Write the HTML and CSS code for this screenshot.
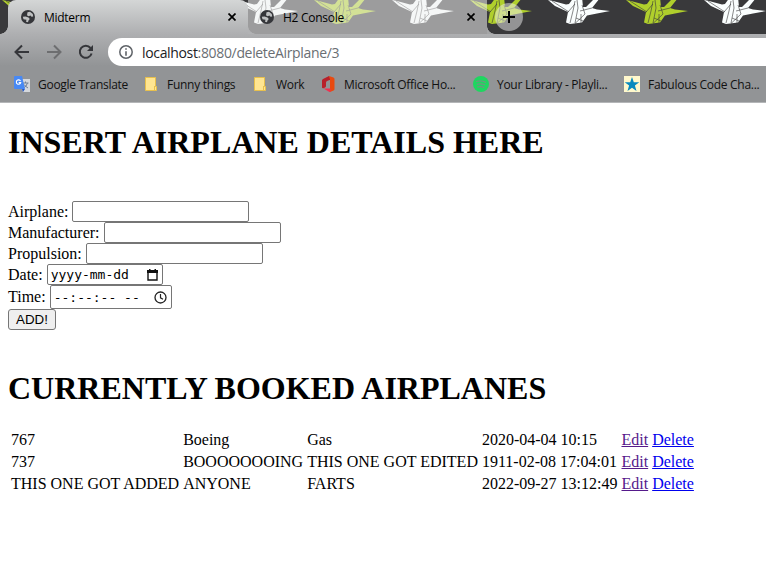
FILE: index.html
```html
<!DOCTYPE html>
<html lang="en">
<head>
<meta charset="utf-8">
<title>Midterm</title>
<link rel="stylesheet" href="styles.css">
</head>
<body>
<svg class="defs" width="0" height="0" aria-hidden="true">
  <symbol id="globe" viewBox="0 0 14 14"><circle cx="7" cy="7" r="7" fill="#35363a"/><path d="M6.500 2.200 9 1.800 11.800 4 12.200 6.500 10.500 6.800 9.500 5.500 7.500 6.200 6 5.200ZM1.800 6.800 4.500 6.500 7.500 7.500 8.800 9 7.500 10.500 7 12.200 5 11.800 5.500 9.800 2.500 9.200Z" fill="#bfc1c2"/></symbol>
  <symbol id="close" viewBox="0 0 8 8"><path d="M.5.5 7.500 7.500M7.500.5.5 7.500" stroke="#000" stroke-width="1.700"/></symbol>
  <symbol id="crane" viewBox="0 0 62 26"><path d="M0 0 5 1 18 4.500 21 4 26-3H34L35 7 38 7 47-2H52L44 8 49 9.500 62 11 49 13.500 39 15.500 34 22.500 22 24 18 22.500 20 12 7 6Z" fill="currentColor"/><path d="M4 1 21 12M27 23 30 8 29 0M22 23 25 11 27 1M34 5 37 14 27 23.500M28 18 35 21M20 12 27 4M32 11 44 8M33 14V23" fill="none" stroke="var(--fold)" stroke-width=".6"/></symbol>
</svg>
<header class="browser">
  <div class="tabs">
    <div class="pattern">
      <svg class="lime"><use href="#crane"/></svg><svg><use href="#crane"/></svg><svg class="lime"><use href="#crane"/></svg><svg><use href="#crane"/></svg><svg class="lime"><use href="#crane"/></svg><svg><use href="#crane"/></svg><svg class="lime"><use href="#crane"/></svg><svg><use href="#crane"/></svg><svg class="lime"><use href="#crane"/></svg><svg><use href="#crane"/></svg>
    </div>
    <div class="tab active"><svg class="globe"><use href="#globe"/></svg><span>Midterm</span><svg class="close"><use href="#close"/></svg></div>
    <div class="tab idle"><svg class="globe"><use href="#globe"/></svg><span>H2 Console</span><svg class="close"><use href="#close"/></svg></div>
    <div class="newtab"><svg width="12" height="12"><path d="M6 0V12M0 6H12" stroke="#000" stroke-width="2"/></svg></div>
  </div>
  <div class="toolbar">
    <svg width="16" height="16" viewBox="0 0 16 16"><path d="M15 8H2M8 1.500 1.500 8 8 14.500" fill="none" stroke="#35363a" stroke-width="2"/></svg>
    <svg width="16" height="16" viewBox="0 0 16 16"><path d="M1 8H14M8 1.500 14.500 8 8 14.500" fill="none" stroke="#6d6e70" stroke-width="2"/></svg>
    <svg width="16" height="16" viewBox="0 0 16 16"><path d="M13.600 9.500A6 6 0 1 1 12.500 4" fill="none" stroke="#35363a" stroke-width="2"/><path d="M15 1V7H9Z" fill="#35363a"/></svg>
    <div class="address"><svg width="14" height="14" viewBox="0 0 14 14"><circle cx="7" cy="7" r="6.200" fill="none" stroke="#5f6368" stroke-width="1.500"/><path d="M7 3.200V4.800M7 6.200V10.800" stroke="#5f6368" stroke-width="1.600"/></svg><span class="url"><b>localhost</b>:8080/deleteAirplane/3</span></div>
  </div>
  <nav class="bookmarks">
    <span class="mark translate"><svg width="16" height="16" viewBox="0 0 16 16"><path d="M6 3H16V16H9Z" fill="#d5d8dc"/><path d="M8.500 7H14.500M11.500 5.500V7M13.500 7Q12.500 10.500 9.500 12M10 8.500Q11.500 10.500 14 12" fill="none" stroke="#718096" stroke-width="1"/><path d="M1 0H8L11 13H1Q0 13 0 12V1Q0 0 1 0Z" fill="#4889f4"/><path d="M8 13H11L9 16Z" fill="#2457c5"/><path d="M6.500 5A2.200 2.200 0 1 0 6.700 6.600H4.700" fill="none" stroke="#fff" stroke-width="1.100"/></svg><span>Google Translate</span></span>
    <span class="mark funny"><svg width="12" height="14"><path d="M.5.5H10.500V9.500H11.500V13.500H.5Z" fill="#ffe591" stroke="#e8c04c"/><path d="M9.500 9V13" stroke="#e8c04c"/></svg><span>Funny things</span></span>
    <span class="mark work"><svg width="12" height="14"><path d="M.5.5H10.500V9.500H11.500V13.500H.5Z" fill="#ffe591" stroke="#e8c04c"/><path d="M9.500 9V13" stroke="#e8c04c"/></svg><span>Work</span></span>
    <span class="mark office"><svg width="13" height="16" viewBox="0 0 13 16"><path d="M0 4.500Q0 3.500 1 3L7 0 9 3.500 5 5Q4 5.500 4 6.500V10Q4 11 3 11.500L1.500 12.300Q0 12.500 0 11.500Z" fill="#b8202a"/><path d="M7 0 11.500 1.500Q12.500 2 12.500 3V13Q12.500 14 11.500 14.500L8 16V3.500Z" fill="#e84a10"/><path d="M1.500 12.500H8.500V16H7.500Z" fill="#f03050"/></svg><span>Microsoft Office Ho...</span></span>
    <span class="mark spotify"><svg width="16" height="16"><circle cx="8" cy="8" r="8" fill="#1ed760"/><path d="M3 5.500Q8 3.800 13 6.300M3.700 8.300Q8 7 12.200 9M4.300 11Q8 10 11.300 11.800" fill="none" stroke="#6f9680" stroke-width="1.300"/></svg><span>Your Library - Playli...</span></span>
    <span class="mark fabulous"><svg width="16" height="16"><path d="M0 0H16V16H0Z" fill="#fff8cc"/><path d="M8 1 9.800 6.200 15.300 6.200 10.900 9.500 12.500 15 8 11.700 3.500 15 5.100 9.500.7 6.200 6.200 6.200Z" fill="#0789be"/></svg><span>Fabulous Code Cha...</span></span>
  </nav>
</header>
<main class="page">
  <h1>INSERT AIRPLANE DETAILS HERE</h1>
  <form class="form">
    <div class="row"><label for="a">Airplane:</label><input id="a" class="text" type="text"></div>
    <div class="row"><label for="m">Manufacturer:</label><input id="m" class="text" type="text"></div>
    <div class="row"><label for="p">Propulsion:</label><input id="p" class="text" type="text"></div>
    <div class="row"><span>Date:</span><div class="field date"><span>yyyy-mm-dd</span><svg width="11" height="12"><path d="M1 2H10V11H1Z" fill="none" stroke="#111" stroke-width="1.400"/><path d="M0 1H11V4H0ZM2 0H3.500V2H2ZM7.500 0H9V2H7.500Z" fill="#111"/></svg></div></div>
    <div class="row time-row"><span>Time:</span><div class="field time"><span>--:--:-- --</span><svg width="13" height="13"><circle cx="6.500" cy="6.500" r="5.500" fill="none" stroke="#222" stroke-width="1.300"/><path d="M6.500 3V6.800L9 8.300" fill="none" stroke="#222" stroke-width="1.200"/></svg></div></div>
    <button class="add" type="button">ADD!</button>
  </form>
  <h1 class="booked">CURRENTLY BOOKED AIRPLANES</h1>
  <table class="planes">
    <tr><td>767</td><td>Boeing</td><td>Gas</td><td>2020-04-04 10:15</td><td><a class="visited" href="#">Edit</a> <a href="#">Delete</a></td></tr>
    <tr><td>737</td><td>BOOOOOOOING</td><td>THIS ONE GOT EDITED</td><td>1911-02-08 17:04:01</td><td><a class="visited" href="#">Edit</a> <a href="#">Delete</a></td></tr>
    <tr><td>THIS ONE GOT ADDED</td><td>ANYONE</td><td>FARTS</td><td>2022-09-27 13:12:49</td><td><a class="visited" href="#">Edit</a> <a href="#">Delete</a></td></tr>
  </table>
</main>
</body>
</html>
```
FILE: styles.css
```css
* { box-sizing: border-box; }
body { margin: 0; background: #fff; color: #000; font: 16px "Liberation Serif", serif; overflow: hidden; }
svg { display: block; flex: none; }
.defs { position: absolute; }
.browser { height: 103px; background: linear-gradient(#d4d6d6 0, #aeafb1 34px, #929496 66px, #929496 102px); border-bottom: 1px solid #b4b6b8; font: 12px "Open Sans", sans-serif; letter-spacing: -.28px; }
.tabs { position: relative; display: flex; height: 34px; background: #39393b; }
.pattern { position: absolute; inset: 0; display: flex; gap: 16px; padding-left: 2px; overflow: hidden; color: #fafefe; --fold: #39393b; }
.pattern svg { width: 62px; height: 26px; overflow: visible; }
.pattern .lime { color: #b0cf2c; }
.tab { position: relative; display: flex; align-items: center; height: 34px; }
.tab.active { z-index: 1; width: 240px; margin-left: 8px; padding: 0 12px 0 13px; background: linear-gradient(#d4d6d6, #aeafb1); border-radius: 8px 8px 0 0; }
.tab.active::before, .tab.active::after, .newtab::before { content: ""; position: absolute; width: 8px; height: 8px; }
.tab.active::before { left: -8px; bottom: 0; background: radial-gradient(circle at 0 0, transparent 7.5px, #b1b2b4 8px); }
.tab.active::after { right: -8px; bottom: 0; background: radial-gradient(circle at 100% 0, transparent 7.5px, #b1b2b4 8px); }
.tab.idle { width: 239px; padding: 0 12px 0 12px; background: rgba(240, 240, 240, .54); }
.tab span { margin-left: 9px; }
.tab .globe { width: 14px; height: 14px; }
.tab .close { width: 8px; height: 8px; margin-left: auto; }
.newtab { position: relative; display: grid; place-items: center; width: 28px; height: 28px; margin: 3px 0 0 8px; border-radius: 50%; background: rgba(240, 240, 240, .5); }
.newtab::before { left: -8px; bottom: -3px; background: radial-gradient(circle at 100% 0, transparent 7.5px, #a4a5a6 8px); }
.toolbar { display: flex; align-items: center; height: 36px; padding: 0 0 0 14px; gap: 16px; }
.address { display: flex; flex: 1; align-items: center; height: 28px; margin-left: -2px; padding-left: 11px; border-radius: 14px 0 0 14px; background: #fff; }
.url { margin-left: 9px; font-size: 14px; letter-spacing: -.34px; color: #6a6e73; white-space: nowrap; }
.url b { font-weight: 400; color: #202124; }
.bookmarks { display: flex; align-items: center; height: 28px; color: #111; }
.mark { display: flex; align-items: center; white-space: nowrap; }
.page { padding: 0 8px; }
h1 { margin: 0; padding-top: 21px; font-size: 32px; line-height: 37px; white-space: nowrap; }
.form { display: flex; flex-direction: column; align-items: flex-start; margin-top: 40px; }
.row { display: flex; align-items: center; gap: 4px; height: 21px; line-height: 18px; }
.text { width: 177px; height: 21px; margin: 0; padding: 1px 2px; border: 1px solid #767676; border-radius: 2px; background: #fff; }
.field { display: flex; align-items: center; justify-content: space-between; height: 21px; border: 1px solid #767676; border-radius: 2px; font: 13px "DejaVu Sans Mono", monospace; padding: 0 4px 0 3px; }
.date { width: 116px; }
.time-row { height: 24px; }
.time { width: 122px; height: 24px; }
.add { width: 48px; height: 21px; padding: 0; border: 1px solid #767676; border-radius: 3px; background: #efefef; color: #000; font: 13.333px "Liberation Sans", sans-serif; }
.booked { margin-top: 19px; }
.planes { margin-top: 21px; border-spacing: 2px; border-collapse: separate; }
.planes td { padding: 1px; line-height: 18px; white-space: nowrap; }
a { color: #00e; }
.visited { color: #551a8b; }
.translate { width: 131px; padding-left: 14px; gap: 8px; }
.funny { width: 109px; padding-left: 14px; gap: 10px; }
.work { width: 81px; padding-left: 14px; gap: 10px; }
.office { width: 152px; padding-left: 1px; gap: 9px; }
.spotify { width: 151px; gap: 8px; }
.fabulous { gap: 8px; }
```
